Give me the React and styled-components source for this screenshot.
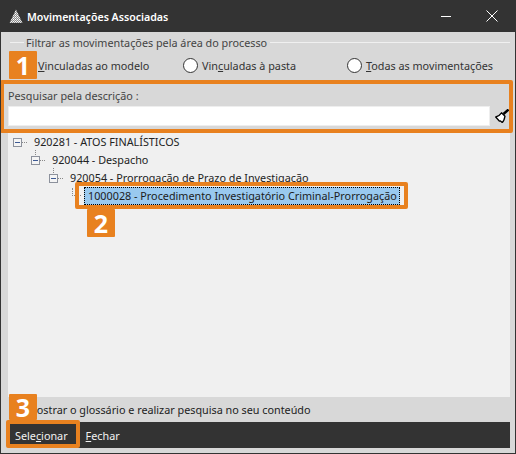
import React from "react";
import styled, { createGlobalStyle } from "styled-components";

const Global = createGlobalStyle`
  html, body { margin: 0; padding: 0; background: #d8d8d8; }
  * { box-sizing: border-box; }
`;
const ORANGE = "#e8811f";

const Win = styled.div`
  position: relative;
  width: 516px;
  height: 454px;
  overflow: hidden;
  display: flex;
  flex-direction: column;
  background: #d8d8d8;
  border: solid #333;
  border-width: 0 1px 1px 1px;
  font-family: "Noto Sans", sans-serif;
  font-size: 10.8px;
  color: #333;
`;
const TitleBar = styled.div`
  height: 32px;
  flex: none;
  margin: 0 -1px;
  background: #333;
  color: #fff;
  display: flex;
  align-items: center;
  padding: 0 18px 0 9px;
`;
const TitleText = styled.div`
  margin: 1px 0 0 4px;
  font-size: 10.6px;
  font-weight: 600;
  flex: 1;
`;
const WinButton = styled.svg`
  display: block;
  flex: none;
  margin-left: ${(p) => p.$gap}px;
`;
const Body = styled.div`
  flex: 1;
  min-height: 0;
  display: flex;
  flex-direction: column;
  padding: 0 5px 4px 7px;
`;
const Legend = styled.div`
  height: 21px;
  display: flex;
  align-items: center;
  margin-left: 2px;
  color: #444;
  &::before {
    content: "";
    width: 14px;
    height: 1px;
    margin-right: 2px;
    background: #f0f0f0;
  }
  &::after {
    content: "";
    flex: 1;
    height: 1px;
    margin-left: 3px;
    background: #f0f0f0;
  }
`;
const RadioRow = styled.div`
  height: 30px;
  display: grid;
  grid-template-columns: 164px 164px 1fr;
  align-items: center;
  padding: 0 0 6px 11px;
`;
const RadioItem = styled.label`
  display: flex;
  align-items: center;
  gap: 4px;
  color: #333;
  white-space: nowrap;
`;
const RadioDot = styled.span`
  width: 15px;
  height: 15px;
  border-radius: 50%;
  background: #fff;
  border: 1.5px solid #333;
  flex: none;
`;
const SearchArea = styled.div`
  height: 50px;
  display: flex;
  flex-direction: column;
`;
const SearchLabel = styled.div`
  height: 23px;
  padding-top: 5px;
  line-height: 16px;
  color: #444;
`;
const SearchRow = styled.div`
  display: flex;
  align-items: center;
  gap: 5px;
`;
const SearchInput = styled.div`
  flex: none;
  width: 482px;
  height: 20px;
  background: #fff;
  border: 1px solid #eee;
`;
const BroomIcon = styled.svg`
  flex: none;
  margin-top: -1px;
`;
const TreePanel = styled.div`
  height: 264px;
  flex: none;
  background: #f0f0f0;
  color: #222;
`;
const TreeRow = styled.div`
  height: 18px;
  display: flex;
  align-items: center;
  padding-left: ${(p) => 5 + p.$depth * 18}px;
`;
const Expander = styled.span`
  position: relative;
  width: 9px;
  height: 9px;
  flex: none;
  border: 1px solid #8c919c;
  background: #f4f4f4;
  &::before {
    content: "";
    position: absolute;
    left: 1px;
    right: 1px;
    top: 3px;
    height: 1px;
    background: #3d5a94;
  }
  &::after {
    content: "";
    position: absolute;
    left: 8px;
    top: 3px;
    width: 6px;
    height: 1px;
    background: repeating-linear-gradient(90deg, #888 0 1px, transparent 1px 2px);
  }
`;
const Stem = styled.span`
  position: absolute;
  margin-left: 4px;
  margin-top: -15px;
  width: 1px;
  height: 5px;
  background: repeating-linear-gradient(180deg, #888 0 1px, transparent 1px 2px);
`;
const NodeText = styled.span`
  margin: -2px 0 0 12px;
  white-space: nowrap;
`;
const Elbow = styled.span`
  width: 9px;
  height: 8px;
  flex: none;
  margin: -8px 0 0 5px;
  border-left: 1px dotted #888;
  border-bottom: 1px dotted #888;
`;
const SelectedNode = styled.span`
  margin-left: 3px;
  padding: 0 3px;
  height: 18px;
  line-height: 15px;
  width: 316px;
  white-space: nowrap;
  background: #99c9ef;
  border: 1px dotted #000;
  color: #1c1c1c;
`;
const OptionLine = styled.div`
  height: 25px;
  display: flex;
  align-items: center;
  padding-left: 19px;
  color: #222;
`;
const Footer = styled.div`
  height: 26px;
  flex: none;
  background: #333;
  color: #f2f2f2;
  display: flex;
  align-items: center;
`;
const FooterButton = styled.div`
  padding: 0 ${(p) => p.$pad}px;
`;
const Highlight = styled.div`
  position: absolute;
  left: ${(p) => p.$x}px;
  top: ${(p) => p.$y}px;
  width: ${(p) => p.$w}px;
  height: ${(p) => p.$h}px;
  border: 4px solid ${ORANGE};
  border-radius: 2px;
  pointer-events: none;
`;
const Badge = styled.div`
  position: absolute;
  left: ${(p) => p.$x}px;
  top: ${(p) => p.$y}px;
  width: 28px;
  height: ${(p) => p.$h}px;
  background: ${ORANGE};
  color: #fff;
  font-family: "Open Sans", sans-serif;
  font-size: 25px;
  font-weight: 700;
  line-height: ${(p) => p.$h}px;
  text-align: center;
  border-radius: 1px;
`;

const Logo = () => (
  <svg width="14" height="15" viewBox="0 0 14 15" style={{ flex: "none" }}>
    <defs>
      <pattern id="chk" width="2" height="2" patternUnits="userSpaceOnUse">
        <rect width="2" height="2" fill="#8a8a8a" />
        <rect width="1" height="1" fill="#fff" />
        <rect x="1" y="1" width="1" height="1" fill="#ddd" />
      </pattern>
    </defs>
    <path d="M7 0.5 L13.5 14 H0.5 Z" fill="url(#chk)" />
  </svg>
);
const Broom = () => (
  <BroomIcon width="14" height="14" viewBox="0 0 14 14">
    <path d="M8.5 5 L13.5 0.5" stroke="#000" strokeWidth="2.4" fill="none" />
    <path d="M6.5 3.8 L10 7.2 C9.5 10 8.5 12.5 7.2 13.5 L5.5 12 L4.5 12.2 L0.7 8 C3 7.6 5 6 6.5 3.8 Z" fill="#fff" stroke="#000" strokeWidth="1.3" strokeLinejoin="round" />
  </BroomIcon>
);

export default function App() {
  return (
    <Win>
      <Global />
      <TitleBar>
        <Logo />
        <TitleText>Movimentações Associadas</TitleText>
        <WinButton $gap={0} width="10" height="10" viewBox="0 0 10 10">
          <path d="M0 5.5 H10" stroke="#fff" strokeWidth="1" />
        </WinButton>
        <WinButton $gap={35} width="12" height="12" viewBox="0 0 12 12">
          <path d="M0.5 0.5 L11.5 11.5 M11.5 0.5 L0.5 11.5" stroke="#fff" strokeWidth="1" />
        </WinButton>
      </TitleBar>
      <Body>
        <Legend>Filtrar as movimentações pela área do processo</Legend>
        <RadioRow>
          <RadioItem><RadioDot /><span><u>V</u>inculadas ao modelo</span></RadioItem>
          <RadioItem><RadioDot /><span>Vin<u>c</u>uladas à pasta</span></RadioItem>
          <RadioItem><RadioDot /><span><u>T</u>odas as movimentações</span></RadioItem>
        </RadioRow>
        <SearchArea>
          <SearchLabel>Pesquisar pela descrição :</SearchLabel>
          <SearchRow>
            <SearchInput />
            <Broom />
          </SearchRow>
        </SearchArea>
        <TreePanel>
          <TreeRow $depth={0}>
            <Expander />
            <NodeText>920281 - ATOS FINALÍSTICOS</NodeText>
          </TreeRow>
          <TreeRow $depth={1}>
            <Expander />
            <Stem />
            <NodeText>920044 - Despacho</NodeText>
          </TreeRow>
          <TreeRow $depth={2}>
            <Expander />
            <Stem />
            <NodeText>920054 - Prorrogação de Prazo de Investigação</NodeText>
          </TreeRow>
          <TreeRow $depth={3}>
            <Elbow />
            <SelectedNode>1000028 - Procedimento Investigatório Criminal-Prorrogação</SelectedNode>
          </TreeRow>
        </TreePanel>
        <OptionLine>Mostrar o glossário e realizar pesquisa no seu conteúdo</OptionLine>
        <Footer>
          <FooterButton $pad={7}>Sele<u>c</u>ionar</FooterButton>
          <FooterButton $pad={11}><u>F</u>echar</FooterButton>
        </Footer>
      </Body>
      <Highlight $x={-1} $y={80} $w={513} $h={53} />
      <Highlight $x={74} $y={182} $w={333} $h={27} />
      <Highlight $x={5} $y={420} $w={74} $h={28} />
      <Badge $x={8} $y={51} $h={28}>1</Badge>
      <Badge $x={86} $y={209} $h={28}>2</Badge>
      <Badge $x={8} $y={394} $h={26}>3</Badge>
    </Win>
  );
}
